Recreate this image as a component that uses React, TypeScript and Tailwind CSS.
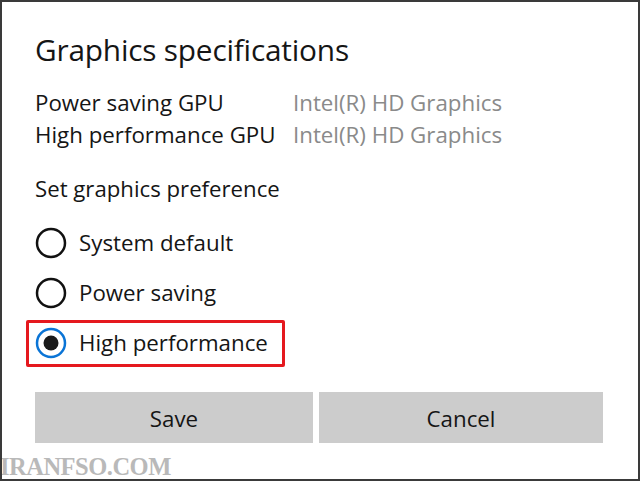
import React from "react";

function Radio({ checked }: { checked?: boolean }) {
  return (
    <svg width="32" height="32" viewBox="0 0 32 32" className="shrink-0">
      {checked ? (
        <>
          <circle cx="16" cy="16" r="14" fill="none" stroke="#0a74d6" strokeWidth="2.5" />
          <circle cx="16" cy="16" r="7.5" fill="#1a1a1a" />
        </>
      ) : (
        <circle cx="16" cy="16" r="14" fill="none" stroke="#111" strokeWidth="2.5" />
      )}
    </svg>
  );
}

export default function App() {
  const font = { fontFamily: '"Open Sans", "Noto Sans", sans-serif' };
  return (
    <div
      className="relative w-[640px] h-[481px] bg-white border-2 border-[#3a3a3a] overflow-hidden text-[#151515]"
      style={font}
    >
      <div className="pl-[33px] pt-[31px]">
        <div className="text-[29.8px] leading-[34px] tracking-[-0.2px]">Graphics specifications</div>
        <div className="mt-[20px] text-[22.3px] leading-[32px] grid grid-cols-[258px_auto]">
          <div>Power saving GPU</div>
          <div className="text-[#8a8a8a]">Intel(R) HD Graphics</div>
          <div>High performance GPU</div>
          <div className="text-[#8a8a8a]">Intel(R) HD Graphics</div>
        </div>
        <div className="mt-[22px] text-[22.2px] leading-[32px]">Set graphics preference</div>
        <div className="mt-[13px] flex flex-col text-[22.3px]">
          <div className="h-[50px] flex items-center gap-[12px]">
            <Radio />
            <span>System default</span>
          </div>
          <div className="h-[50px] flex items-center gap-[12px]">
            <Radio />
            <span>Power saving</span>
          </div>
          <div className="relative h-[50px] flex items-center gap-[12px]">
            <div className="absolute left-[-9px] top-[2px] w-[259px] h-[47px] border-[3px] border-[#e5181e] rounded-[2px]" />
            <Radio checked />
            <span>High performance</span>
          </div>
        </div>
        <div className="mt-[24px] w-[568px] grid grid-cols-[278px_284px] gap-[6px] text-[22.3px]">
          <div className="h-[51px] pt-[2px] bg-[#cccccc] flex items-center justify-center">Save</div>
          <div className="h-[51px] pt-[2px] bg-[#cccccc] flex items-center justify-center">Cancel</div>
        </div>
      </div>
      <div
        className="absolute left-[-2px] bottom-[-1px] text-[24.5px] font-bold text-[#b9b9b9] leading-[26px] tracking-[-0.5px]"
        style={{ fontFamily: '"Liberation Serif", serif' }}
      >
        IRANFSO.COM
      </div>
    </div>
  );
}
